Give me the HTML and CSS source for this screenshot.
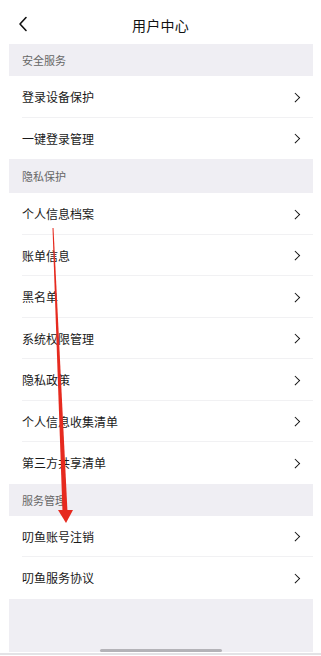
FILE: index.html
```html
<!DOCTYPE html>
<html lang="zh">
<head>
<meta charset="utf-8">
<link rel="stylesheet" href="styles.css">
</head>
<body>
<div class="page">
  <header class="topbar">
    <svg class="back" width="10" height="16" viewBox="0 0 10 16"><path d="M8 1.5 L2 8 L8 14.5" fill="none" stroke="#111" stroke-width="1.6" stroke-linecap="round" stroke-linejoin="round"/></svg>
    <div class="title">用户中心</div>
  </header>
  <main class="content">
    <div class="sec">安全服务</div>
    <div class="row"><span>登录设备保护</span><i class="chev"></i></div>
    <div class="row last"><span>一键登录管理</span><i class="chev"></i></div>
    <div class="sec tall">隐私保护</div>
    <div class="row"><span>个人信息档案</span><i class="chev"></i></div>
    <div class="row"><span>账单信息</span><i class="chev"></i></div>
    <div class="row"><span>黑名单</span><i class="chev"></i></div>
    <div class="row"><span>系统权限管理</span><i class="chev"></i></div>
    <div class="row"><span>隐私政策</span><i class="chev"></i></div>
    <div class="row"><span>个人信息收集清单</span><i class="chev"></i></div>
    <div class="row last"><span>第三方共享清单</span><i class="chev"></i></div>
    <div class="sec">服务管理</div>
    <div class="row"><span>叨鱼账号注销</span><i class="chev"></i></div>
    <div class="row last"><span>叨鱼服务协议</span><i class="chev"></i></div>
    <div class="filler"><div class="home"></div></div>
  </main>
  <div class="bottomline"></div>
  <svg class="arrow" width="321" height="656" viewBox="0 0 321 656">
    <polygon points="52.5,228 53.5,228 67.5,512 62.5,512" fill="#e62a1f"/>
    <polygon points="58,510 73,510 66,523" fill="#e62a1f"/>
  </svg>
</div>
</body>
</html>
```
FILE: styles.css
```css
* { box-sizing: border-box; margin: 0; padding: 0; }
html, body { background: #fff; }
body {
  font-family: "Noto Sans CJK SC", "Noto Sans", sans-serif;
  color: #1a1a1a;
  width: 321px;
  height: 656px;
  overflow: hidden;
}
.page { position: relative; width: 321px; height: 656px; }
.topbar {
  height: 44px;
  display: flex;
  align-items: center;
  justify-content: center;
  position: relative;
}
.back { position: absolute; left: 18px; top: 16px; }
.title { font-size: 14px; color: #111; margin-top: 6px; letter-spacing: 0.2px; }
.content { margin: 0 8px 0 9px; display: flex; flex-direction: column; }
.sec {
  height: 32px;
  background: #efeef3;
  color: #666;
  font-size: 11px;
  display: flex;
  align-items: center;
  padding-left: 13px;
}
.sec.tall { height: 34px; }
.row {
  height: 41.5px;
  display: flex;
  align-items: center;
  justify-content: space-between;
  padding: 0 14px 0 13px;
  font-size: 12px;
  color: #1a1a1a;
  position: relative;
}
.row::after {
  content: "";
  position: absolute;
  left: 13px; right: 0; bottom: 0;
  height: 1px;
  background: #f1f1f3;
}
.row.last::after { display: none; }
.chev {
  width: 6.5px; height: 6.5px;
  border-top: 1.7px solid #111;
  border-right: 1.7px solid #111;
  transform: rotate(45deg);
  margin-right: 1px;
}
.filler {
  height: 53px;
  background: #efeef3;
  position: relative;
}
.home {
  position: absolute;
  left: 91px; bottom: 0;
  width: 122px; height: 3px;
  border-radius: 2px;
  background: #b4b3b8;
}
.bottomline { height: 2px; background: #e3e3e6; margin-top: 1px; }
.arrow { position: absolute; left: 0; top: 0; pointer-events: none; }
```
